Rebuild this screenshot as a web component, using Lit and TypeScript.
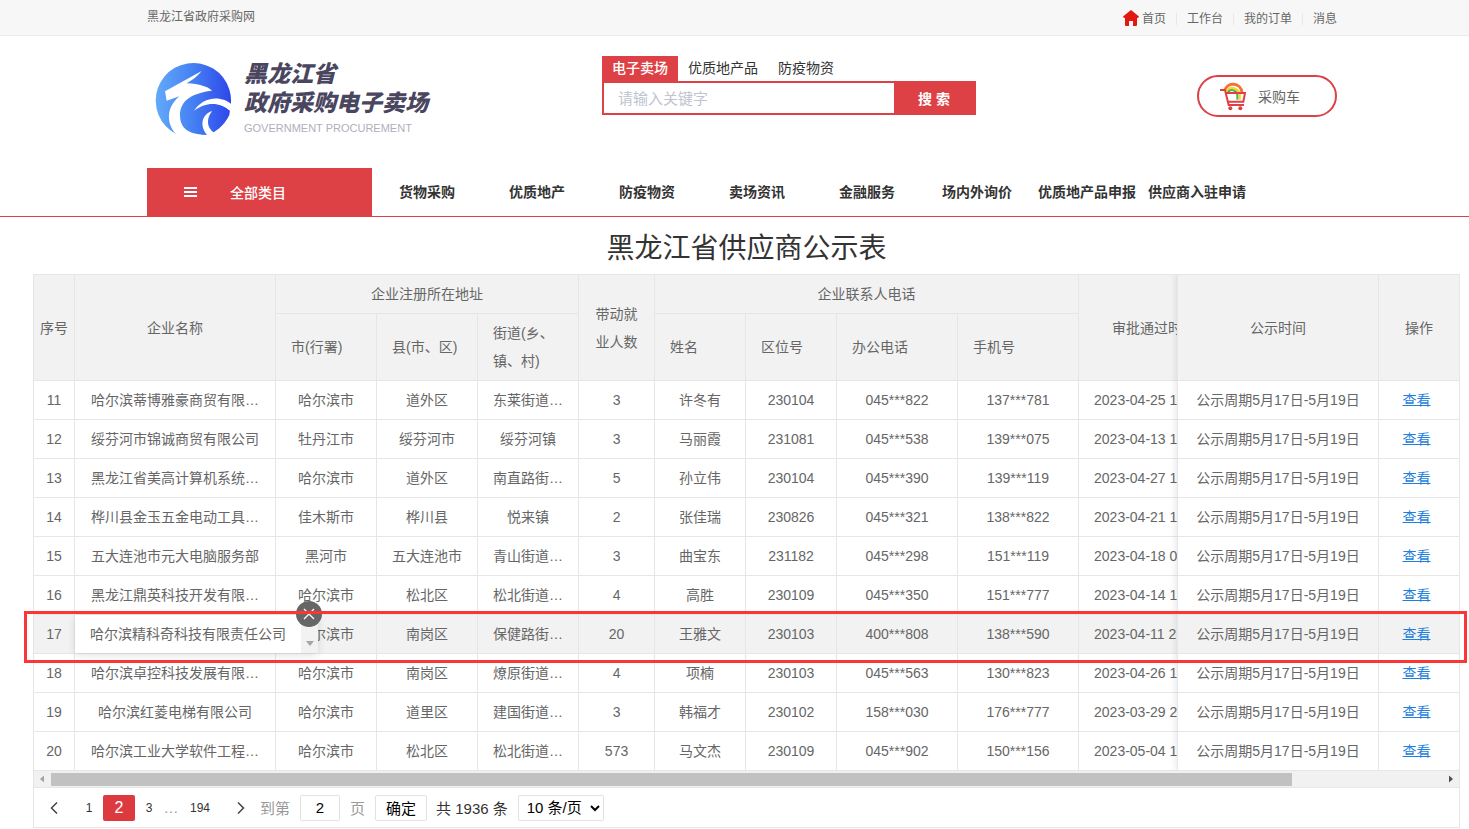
import { LitElement, html, css } from "lit";
import { customElement, property } from "lit/decorators.js";
import { classMap } from "lit/directives/class-map.js";

interface Supplier {
  no: number;
  name: string;
  city: string;
  county: string;
  street: string;
  jobs: number;
  contact: string;
  zone: string;
  office: string;
  mobile: string;
  approved: string;
}

const row = (
  no: number, name: string, city: string, county: string, street: string, jobs: number,
  contact: string, zone: string, office: string, mobile: string, approved: string,
): Supplier => ({ no, name, city, county, street, jobs, contact, zone, office, mobile, approved });

const SUPPLIERS: Supplier[] = [
  row(11, "哈尔滨蒂博雅豪商贸有限…", "哈尔滨市", "道外区", "东莱街道…", 3, "许冬有", "230104", "045***822", "137***781", "2023-04-25 1"),
  row(12, "绥芬河市锦诚商贸有限公司", "牡丹江市", "绥芬河市", "绥芬河镇", 3, "马丽霞", "231081", "045***538", "139***075", "2023-04-13 1"),
  row(13, "黑龙江省美高计算机系统…", "哈尔滨市", "道外区", "南直路街…", 5, "孙立伟", "230104", "045***390", "139***119", "2023-04-27 1"),
  row(14, "桦川县金玉五金电动工具…", "佳木斯市", "桦川县", "悦来镇", 2, "张佳瑞", "230826", "045***321", "138***822", "2023-04-21 1"),
  row(15, "五大连池市元大电脑服务部", "黑河市", "五大连池市", "青山街道…", 3, "曲宝东", "231182", "045***298", "151***119", "2023-04-18 0"),
  row(16, "黑龙江鼎英科技开发有限…", "哈尔滨市", "松北区", "松北街道…", 4, "高胜", "230109", "045***350", "151***777", "2023-04-14 1"),
  row(17, "哈尔滨精科奇科技有限责任公司", "哈尔滨市", "南岗区", "保健路街…", 20, "王雅文", "230103", "400***808", "138***590", "2023-04-11 2"),
  row(18, "哈尔滨卓控科技发展有限…", "哈尔滨市", "南岗区", "燎原街道…", 4, "项楠", "230103", "045***563", "130***823", "2023-04-26 1"),
  row(19, "哈尔滨红菱电梯有限公司", "哈尔滨市", "道里区", "建国街道…", 3, "韩福才", "230102", "158***030", "176***777", "2023-03-29 2"),
  row(20, "哈尔滨工业大学软件工程…", "哈尔滨市", "松北区", "松北街道…", 573, "马文杰", "230109", "045***902", "150***156", "2023-05-04 1"),
];

const ACTIVE = 17;
const PERIOD = "公示周期5月17日-5月19日";
const NAV = ["货物采购", "优质地产", "防疫物资", "卖场资讯", "金融服务", "场内外询价", "优质地产品申报", "供应商入驻申请"];

const base = css`
  *, *::before, *::after { box-sizing: border-box; }
  a { color: inherit; text-decoration: none; }
  button, input, select { font-family: inherit; margin: 0; }
  svg { display: block; }
`;

@customElement("top-bar")
class TopBar extends LitElement {
  static styles = [base, css`
    :host { display: block; padding-left: 15px; background: #f7f7f7; border-bottom: 1px solid #ebebeb; font-size: 12px; color: #666; }
    .inner { width: 1190px; max-width: 100%; margin: 0 auto; display: flex; justify-content: space-between; height: 35px; }
    .site { line-height: 34px; }
    .links { display: flex; align-items: center; padding-top: 2px; }
    .links a { padding: 0 10px; border-left: 1px solid #e8e8e8; line-height: 12px; }
    .links a:first-child { display: flex; align-items: center; gap: 3px; border-left: 0; }
    .links a:last-child { padding-right: 0; }
  `];

  render() {
    return html`
      <div class="inner">
        <a class="site" href="#">黑龙江省政府采购网</a>
        <nav class="links">
          <a href="#">
            <svg width="16" height="18" viewBox="0 0 16 18"><path fill="#e2190f" d="M8 0 16 6.600 15 8H14V15Q14 16 13 16H10V11H6V16H3Q2 16 2 15V8H1L0 6.600Z"/></svg>
            首页
          </a>
          <a href="#">工作台</a>
          <a href="#">我的订单</a>
          <a href="#">消息</a>
        </nav>
      </div>`;
  }
}

@customElement("site-header")
class SiteHeader extends LitElement {
  static styles = [base, css`
    :host { display: block; }
    .top, .bar { padding-left: 15px; }
    .inner { width: 1190px; max-width: 100%; margin: 0 auto; display: flex; align-items: flex-start; height: 132px; }
    .logo { display: flex; gap: 9px; padding: 24px 0 0 6px; width: 455px; }
    .words { color: #4a465f; font-size: 23px; font-weight: 900; font-style: italic; line-height: 29px; white-space: nowrap; }
    .en { color: #b0afbb; font-size: 11px; font-weight: 400; font-style: normal; line-height: 20px; }
    .search { width: 374px; padding-top: 20px; font-size: 14px; color: #333; }
    .tabs { display: flex; line-height: 25px; }
    .tabs button { border: 0; background: none; padding: 0 10px; font-size: 14px; line-height: 25px; color: #333; }
    .tabs button.on { background: #dd4145; color: #fff; font-weight: 500; }
    .box { display: flex; height: 34px; border: 2px solid #dd4145; background: #dd4145; }
    .box input { flex: 1; min-width: 0; border: 0; padding: 0 14px; font-size: 15px; background: #fff; outline: 0; }
    .box input::placeholder { color: #c0c4cf; opacity: 1; }
    .box button { width: 80px; border: 0; background: #dd4145; color: #fff; font-size: 14px; font-weight: 700; }
    .cart { margin: 39px 0 0 auto; width: 140px; height: 42px; border: 2px solid #dd4145; border-radius: 21px; display: flex; align-items: center; gap: 12px; padding-left: 21px; font-size: 14px; color: #666; }
    .bar { border-bottom: 1px solid #dd4145; }
    .nav { width: 1190px; max-width: 100%; margin: 0 auto; display: flex; height: 48px; font-size: 14px; line-height: 48px; font-weight: 600; color: #333; white-space: nowrap; }
    .all { width: 225px; background: #dd4145; color: #fff; display: flex; align-items: center; padding: 0 0 1px 37px; gap: 33px; border: 0; font-size: 14px; font-weight: 500; }
    .nav a { width: 110px; text-align: center; }
  `];

  render() {
    return html`
      <div class="top"><div class="inner">
        <div class="logo">
          <svg width="82" height="78" viewBox="0 0 246 234">
            <defs>
              <linearGradient id="g" x1="0" x2="1"><stop offset="0" stop-color="#62aafa"/><stop offset=".5" stop-color="#4580f3"/><stop offset="1" stop-color="#2d46ea"/></linearGradient>
            </defs>
            <path fill="url(#g)" d="M69 222A113 113 0 1 1 234 128L229 165Q217 190 196 207L170 225Q120 224 69 222Z"/>
            <path fill="#fff" d="M146 33 36 94 41 122 79 109C40 142 38 188 70 224L110 240 150 226 138 223C110 219 81 207 81 166C81 127 108 100 177 92C165 80 140 72 101 70C117 61 135 48 146 33Z"/>
            <path fill="#fff" d="M123 153C142 118 198 98 240 136L230 152C203 126 157 124 123 153Z"/>
            <path fill="#fff" d="M177 153C145 164 138 200 165 228L176 228 183 218C160 202 160 176 177 153Z"/>
          </svg>
          <div class="words">
            黑龙江省<br>政府采购电子卖场
            <div class="en">GOVERNMENT PROCUREMENT</div>
          </div>
        </div>
        <form class="search" @submit=${(e: Event) => e.preventDefault()}>
          <div class="tabs">
            <button type="button" class="on">电子卖场</button><button type="button">优质地产品</button><button type="button">防疫物资</button>
          </div>
          <div class="box"><input type="search" aria-label="请输入关键字" placeholder="请输入关键字"><button>搜 索</button></div>
        </form>
        <a class="cart" href="#">
          <svg width="26" height="30" viewBox="0 -12 78 90" fill="none">
            <path d="M14 15A27 27 0 0 1 66 22" stroke="#f4713b" stroke-width="9"/>
            <path d="M19 19A22 22 0 0 1 59 28V44" stroke="#fbd91c" stroke-width="7"/>
            <path d="M24 21A16 16 0 0 1 52 30V44" stroke="#52b066" stroke-width="6"/>
            <path d="M0 15H15L26 60H72M17 24H75L70 50H23" stroke="#dd4145" stroke-width="6"/>
            <circle cx="31" cy="70" r="6" fill="#dd4145"/><circle cx="61" cy="70" r="6" fill="#dd4145"/>
          </svg>
          采购车
        </a>
      </div></div>
      <div class="bar">
        <nav class="nav">
          <button class="all" type="button">
            <svg width="13" height="10" viewBox="0 0 13 10"><path d="M0 1H13M0 5H13M0 9H13" stroke="#fff" stroke-width="2"/></svg>
            全部类目
          </button>
          ${NAV.map((n) => html`<a href="#">${n}</a>`)}
        </nav>
      </div>`;
  }
}

@customElement("supplier-table")
class SupplierTable extends LitElement {
  @property({ attribute: false }) rows: Supplier[] = [];

  static styles = [base, css`
    :host { display: block; position: relative; color: #666; font-size: 14px; line-height: 28px; }
    .frame { display: flex; border: 1px solid #e6e6e6; border-width: 1px 0 0 1px; }
    .main { flex: 1; min-width: 0; overflow: hidden; }
    .fixed { border-left: 1px solid #e6e6e6; box-shadow: 0 -1px 8px rgba(0, 0, 0, .12); clip-path: inset(0 0 0 -12px); }
    table { border-collapse: separate; border-spacing: 0; table-layout: fixed; background: #fff; }
    .main table { width: 1196px; }
    .fixed table { width: 282px; }
    th, td { height: 39px; padding: 5px 15px; border: 1px solid #e6e6e6; border-width: 0 1px 1px 0; text-align: center; font-weight: 400; white-space: nowrap; }
    th { background: #f2f2f2; white-space: normal; }
    .low th { height: 67px; text-align: left; }
    .tight { padding: 5px 0; }
    .tall { height: 106px; }
    td.time { text-align: left; }
    .active td { background: #f2f2f2; }
    td.open { position: relative; }
    td.act { padding: 5px 20px 5px 15px; }
    td.act a { color: #1e7fdc; text-decoration: underline; text-underline-offset: 0; }

    .tip { position: absolute; left: 0; top: 0; z-index: 1; display: flex; height: 38px; background: #fff; box-shadow: 0 2px 8px rgba(0, 0, 0, .12); }
    .tip span { padding: 5px 15px; }
    .grip { width: 17px; background: #f2f2f2; display: flex; justify-content: center; align-items: flex-end; padding-bottom: 7px; }
    .close { position: absolute; right: -4px; top: -14px; width: 26px; height: 26px; border: 0; border-radius: 50%; padding: 0; background: #666; display: grid; place-items: center; }

    .mark { position: absolute; z-index: 2; left: -9px; right: -7px; top: 337px; height: 52px; border: 3px solid #fb3636; pointer-events: none; }

    .scroll { display: flex; align-items: center; height: 17px; background: #f1f1f1; border: 1px solid #e6e6e6; border-top: 0; }
    .scroll svg { flex: none; width: 17px; }
    .track { flex: 1; }
    .thumb { width: 89.2%; height: 13px; background: #c1c1c1; }
  `];

  render() {
    return html`
      <div class="frame">
        <div class="main">
          <table>
            <colgroup>${[41, 201, 101, 101, 101, 76, 91, 91, 121, 121, 151].map((w) => html`<col style="width:${w}px">`)}</colgroup>
            <thead>
              <tr>
                <th rowspan="2" class="tight">序号</th>
                <th rowspan="2">企业名称</th>
                <th colspan="3">企业注册所在地址</th>
                <th rowspan="2">带动就业人数</th>
                <th colspan="4">企业联系人电话</th>
                <th rowspan="2">审批通过时间</th>
              </tr>
              <tr class="low">
                <th>市(行署)</th><th>县(市、区)</th><th>街道(乡、镇、村)</th>
                <th>姓名</th><th>区位号</th><th>办公电话</th><th>手机号</th>
              </tr>
            </thead>
            <tbody>
              ${this.rows.map((r) => html`
                <tr class=${classMap({ active: r.no === ACTIVE })}>
                  <td class="tight">${r.no}</td>
                  ${r.no === ACTIVE ? this.openCell(r.name) : html`<td>${r.name}</td>`}
                  <td>${r.city}</td><td class="tight">${r.county}</td><td>${r.street}</td><td>${r.jobs}</td>
                  <td>${r.contact}</td><td>${r.zone}</td><td>${r.office}</td><td>${r.mobile}</td>
                  <td class="time">${r.approved}</td>
                </tr>`)}
            </tbody>
          </table>
        </div>
        <div class="fixed">
          <table>
            <colgroup><col style="width:201px"><col style="width:81px"></colgroup>
            <thead><tr><th class="tall">公示时间</th><th class="tall">操作</th></tr></thead>
            <tbody>
              ${this.rows.map((r) => html`
                <tr class=${classMap({ active: r.no === ACTIVE })}>
                  <td>${PERIOD}</td><td class="act"><a href="#">查看</a></td>
                </tr>`)}
            </tbody>
          </table>
        </div>
      </div>
      <div class="scroll">
        <svg height="16" viewBox="0 0 17 16"><path d="M10 4.500V11.500L6 8Z" fill="#a3a3a3"/></svg>
        <div class="track"><div class="thumb"></div></div>
        <svg height="16" viewBox="0 0 17 16"><path d="M7 4.500V11.500L11 8Z" fill="#505050"/></svg>
      </div>
      <div class="mark"></div>`;
  }

  private openCell(name: string) {
    return html`
      <td class="open">
        <div class="tip">
          <span>${name}</span>
          <div class="grip"><svg width="8" height="5" viewBox="0 0 8 5"><path d="M0 0H8L4 5Z" fill="#a6a6a6"/></svg></div>
          <button class="close" type="button" aria-label="关闭"><svg width="12" height="12" viewBox="0 0 12 12"><path d="M1 1 11 11M11 1 1 11" stroke="#fff" stroke-width="1.300"/></svg></button>
        </div>
      </td>`;
  }
}

@customElement("page-bar")
class PageBar extends LitElement {
  static styles = [base, css`
    :host { display: flex; align-items: center; height: 40px; border: 1px solid #e6e6e6; border-top: 0; padding-left: 10px; font-size: 15px; color: #333; }
    .step { display: grid; place-items: center; width: 20px; height: 26px; }
    .page { width: 28px; text-align: center; font-size: 12px; line-height: 26px; }
    .current { width: 32px; border-radius: 2px; background: #dd3a40; color: #fff; font-size: 16px; }
    .dots { width: 16px; text-align: center; color: #999; }
    .last { width: 42px; }
    .prev { margin-right: 11px; }
    .next { margin: 0 9px 0 10px; }
    .jump { display: flex; align-items: center; gap: 10px; color: #999; }
    input, .ok, select { height: 26px; border: 1px solid #e2e2e2; border-radius: 2px; background: #fff; font-size: 15px; color: #000; }
    input { width: 40px; padding: 0; text-align: center; }
    .ok { width: 52px; padding: 0; margin: 0 9px 0 10px; }
    select { width: 86px; margin-left: 10px; padding: 0 4px; }
  `];

  render() {
    return html`
      <a class="step prev" href="#" aria-label="上一页"><svg width="8" height="12" viewBox="0 0 8 12"><path d="M7 0.500 1.500 6 7 11.500" fill="none" stroke="#444" stroke-width="1.500"/></svg></a>
      <a class="page" href="#">1</a>
      <span class="page current">2</span>
      <a class="page" href="#">3</a>
      <span class="dots">…</span>
      <a class="page last" href="#">194</a>
      <a class="step next" href="#" aria-label="下一页"><svg width="8" height="12" viewBox="0 0 8 12"><path d="M1 0.500 6.500 6 1 11.500" fill="none" stroke="#444" stroke-width="1.500"/></svg></a>
      <label class="jump">到第 <input type="text" .value=${"2"}> 页</label>
      <button class="ok" type="button">确定</button>
      <span>共 1936 条</span>
      <select aria-label="每页条数"><option>10 条/页</option></select>`;
  }
}

@customElement("app-root")
class AppRoot extends LitElement {
  static styles = [base, css`
    :host { display: block; background: #fff; font-family: "Liberation Sans", "Noto Sans CJK SC", sans-serif; }
    main { margin: 0 9px 0 33px; }
    h1 { margin: 0; padding-top: 11px; height: 57px; font-size: 28px; font-weight: 400; line-height: 42px; text-align: center; color: #333; }
  `];

  render() {
    return html`
      <top-bar></top-bar>
      <site-header></site-header>
      <main>
        <h1>黑龙江省供应商公示表</h1>
        <supplier-table .rows=${SUPPLIERS}></supplier-table>
        <page-bar></page-bar>
      </main>`;
  }
}
